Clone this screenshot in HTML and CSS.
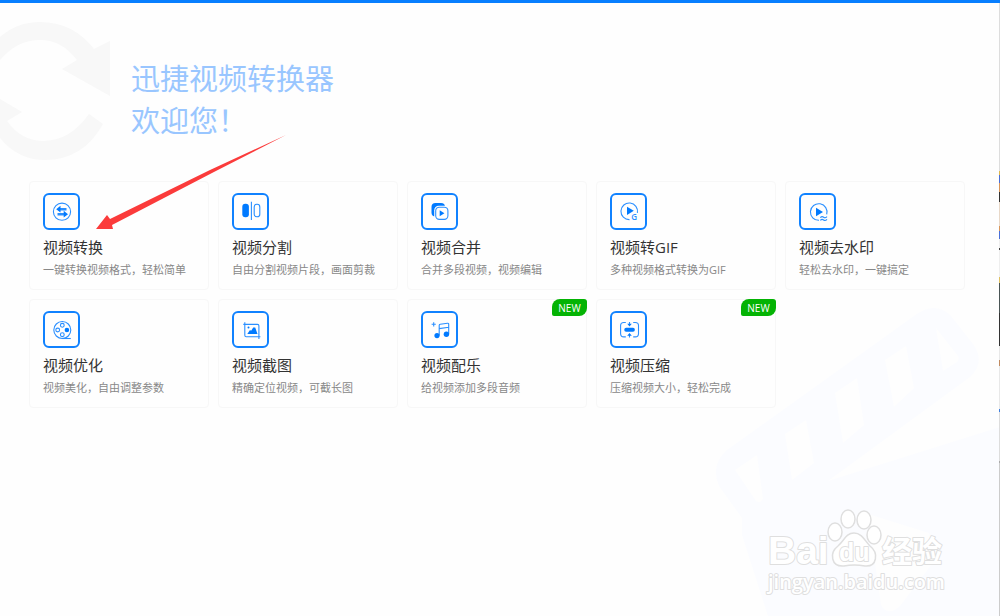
FILE: index.html
```html
<!DOCTYPE html>
<html lang="zh-CN">
<head>
    <meta charset="UTF-8">
    <meta name="viewport" content="width=device-width, initial-scale=1.0">
    <title>迅捷视频转换器</title>
    <link rel="stylesheet" href="styles.css">
</head>
<body>
    <svg class="bg-reload" viewBox="0 0 112 140" aria-hidden="true">
        <path d="M0 17Q17 2 40 2Q73 2 94 29L110 21V76L62 49L77 40Q62 20 40 20Q17 20 0 40Z"/>
        <path d="M0 79L22 92L7 101Q21 121 44 121Q71 120 89 94L103 104Q83 140 45 140Q18 140 0 118Z"/>
    </svg>

    <svg class="bg-clapper" viewBox="715 305 285 311" aria-hidden="true">
        <path fill-rule="evenodd" d="M727 450L914 316Q935 300 951 316L973 344Q986 362 970 377L828 481L1000 427V616H768L742 535V518L719 486Q710 465 727 450Z
            M785 434L806 420L814 463L792 480Z
            M835 393L857 378L864 425L843 443Z
            M885 360L906 346L914 388L894 407Z
            M936 328L958 356Q960 359 957 362L943 371Z
            M735 470L757 455L763 499Q760 504 756 501Z
            M868 514L929 533L935 560L900 606Q888 617 881 605Z"/>
    </svg>

    <header class="welcome">
        <h1>迅捷视频转换器<br>欢迎您！</h1>
    </header>

    <main class="tools">
        <button type="button" class="card">
            <span class="icon">
                <svg viewBox="0 0 33 33">
                    <circle cx="17" cy="16.7" r="8.6"/>
                    <path class="thick" d="M13 14.3H21.5M12.5 19.2H21"/>
                    <path class="solid" d="M15.5 10.8V17.6L11.2 14.2ZM18.7 15.8V22.6L23 19.2Z"/>
                </svg>
            </span>
            <strong>视频转换</strong>
            <small>一键转换视频格式，轻松简单</small>
        </button>

        <button type="button" class="card">
            <span class="icon">
                <svg viewBox="0 0 33 33">
                    <rect class="solid" x="8.3" y="8.8" width="6.6" height="13.5" rx="3"/>
                    <path d="M17.4 6.7V25"/>
                    <rect x="20.2" y="9.3" width="5.6" height="12.5" rx="2.6"/>
                </svg>
            </span>
            <strong>视频分割</strong>
            <small>自由分割视频片段，画面剪裁</small>
        </button>

        <button type="button" class="card">
            <span class="icon">
                <svg viewBox="0 0 33 33">
                    <rect class="solid" x="8.5" y="8" width="13.5" height="13.5" rx="4"/>
                    <rect class="paper" x="11.2" y="10.8" width="15" height="15" rx="4.5"/>
                    <rect x="12.7" y="12.2" width="12.2" height="12.2" rx="3.6"/>
                    <path class="solid" d="M16.7 15.3V21.3L21.4 18.3Z"/>
                </svg>
            </span>
            <strong>视频合并</strong>
            <small>合并多段视频，视频编辑</small>
        </button>

        <button type="button" class="card">
            <span class="icon">
                <svg viewBox="0 0 33 33">
                    <path d="M17.5 24.6A8.3 8.3 0 1 1 25.4 17.8"/>
                    <path class="solid" d="M15 11.7V19.9L21.8 15.8Z"/>
                    <text x="19.2" y="25.2">G</text>
                </svg>
            </span>
            <strong>视频转GIF</strong>
            <small>多种视频格式转换为GIF</small>
        </button>

        <button type="button" class="card">
            <span class="icon">
                <svg viewBox="0 0 33 33">
                    <path d="M18 25.3A8.3 8.3 0 1 1 25.7 19.3"/>
                    <path class="solid" d="M15 12.8V21.2L22 17Z"/>
                    <path d="M19.3 22.6Q21 20.9 22.6 22.2T26 21.6M19.3 25.4Q21 23.7 22.6 25T26 24.4"/>
                </svg>
            </span>
            <strong>视频去水印</strong>
            <small>轻松去水印，一键搞定</small>
        </button>

        <button type="button" class="card">
            <span class="icon">
                <svg viewBox="0 0 33 33">
                    <circle cx="17.3" cy="17" r="8.5"/>
                    <circle cx="17.3" cy="12.3" r="1.9"/>
                    <circle cx="12.7" cy="17" r="1.9"/>
                    <circle class="solid" cx="21.9" cy="17" r="2.3"/>
                    <circle cx="17.3" cy="21.7" r="1.9"/>
                    <path d="M17.3 25.5H25.8"/>
                </svg>
            </span>
            <strong>视频优化</strong>
            <small>视频美化，自由调整参数</small>
        </button>

        <button type="button" class="card">
            <span class="icon">
                <svg viewBox="0 0 33 33">
                    <path d="M9.3 11.4H23.5Q24.9 11.4 24.9 12.8V26M10.8 9.3V22.3Q10.8 23.7 12.2 23.7H26.4"/>
                    <path class="solid" d="M13.3 21L15.8 17.2L17.4 17.6L19.2 14.6H21.2L23.5 21Z"/>
                    <circle class="solid" cx="14.5" cy="14.6" r="1"/>
                </svg>
            </span>
            <strong>视频截图</strong>
            <small>精确定位视频，可截长图</small>
        </button>

        <button type="button" class="card">
            <em class="badge">NEW</em>
            <span class="icon">
                <svg viewBox="0 0 33 33">
                    <path d="M10.7 9.2V13.4M8.6 11.3H12.8"/>
                    <path d="M16.2 22.5V12.4Q16.2 11.4 17.2 11.2L24.5 10.2Q25.7 10.1 25.7 11.2V21M16.2 15.6L25.7 14.2"/>
                    <circle class="solid" cx="14" cy="22.6" r="2.6"/>
                    <circle class="solid" cx="23.4" cy="21.3" r="2.7"/>
                </svg>
            </span>
            <strong>视频配乐</strong>
            <small>给视频添加多段音频</small>
        </button>

        <button type="button" class="card">
            <em class="badge">NEW</em>
            <span class="icon">
                <svg viewBox="0 0 33 33">
                    <path d="M13.8 9.5H11.8Q8.6 9.5 8.6 12.5V20.8Q8.6 23.9 11.8 23.9H13.8M21.2 9.5H23.3Q26.5 9.5 26.5 12.5V20.8Q26.5 23.9 23.3 23.9H21.2"/>
                    <rect class="solid" x="12.3" y="14.8" width="10.5" height="4" rx="1.8"/>
                    <path d="M17.5 9V11.5M17.5 24.4V22"/>
                    <path class="solid" d="M15.2 10.7H19.8L17.5 13.5ZM15.2 22.8H19.8L17.5 20Z"/>
                </svg>
            </span>
            <strong>视频压缩</strong>
            <small>压缩视频大小，轻松完成</small>
        </button>
    </main>

    <!-- flèche vers 视频转换 -->
    <svg class="pointer" viewBox="0 0 192 96" aria-hidden="true">
        <path d="M1 95L12 81L15 85L115 36L191 1L117 39L17 91L18 95Z"/>
    </svg>

    <svg class="watermark" viewBox="0 0 190 92" role="img" aria-label="Baidu 经验">
        <text class="wm-bold" x="8" y="59">Bai</text>
        <ellipse cx="75" cy="27" rx="7" ry="9"/>
        <ellipse cx="88" cy="14" rx="7" ry="9"/>
        <ellipse cx="104" cy="15" rx="7" ry="9"/>
        <ellipse cx="114" cy="30" rx="7" ry="9"/>
        <path d="M94 28C102 28 105 36 110 41C119 48 117 62 105 61Q94 59 84 61C71 62 69 48 78 41C84 36 86 28 94 28Z"/>
        <text class="wm-du" x="79" y="56">du</text>
        <text class="wm-cjk" x="122" y="57">经验</text>
        <text class="wm-url" x="8" y="84">jingyan.baidu.com</text>
    </svg>

    <div class="edge"></div>
</body>
</html>
```
FILE: styles.css
```css
* {
    box-sizing: border-box;
}

body {
    position: relative;
    min-height: 100vh;
    margin: 0;
    overflow: hidden;
    border-top: 3px solid #087fff;
    background: #fefefe;
    font-family: "Open Sans", "Noto Sans CJK SC", sans-serif;
}

/* backgrounds */
.bg-reload {
    position: absolute;
    top: 17px;
    left: 0;
    width: 112px;
    height: 140px;
    fill: #f8f8f8;
}

.bg-clapper {
    position: absolute;
    right: 0;
    bottom: 0;
    width: 285px;
    height: 311px;
    fill: #fbfcff;
}

.welcome {
    position: relative;
    padding: 55px 131px 39px;
}

.welcome h1 {
    margin: 0;
    color: #99c6ff;
    font-size: 29px;
    font-weight: 400;
    line-height: 42px;
}

/* cards */
.tools {
    position: relative;
    display: grid;
    grid-template-columns: repeat(5, 1fr);
    gap: 9px;
    padding: 0 35px 0 29px;
}

.card {
    position: relative;
    display: flex;
    flex-direction: column;
    align-items: flex-start;
    padding: 11px 13px 8px;
    border: 1px solid #f7f7f7;
    border-radius: 4px;
    background: #fefefe;
    font-family: inherit;
    text-align: left;
    white-space: nowrap;
    cursor: pointer;
}

.card:hover {
    border-color: #007aff;
}

.card strong {
    margin-top: 6px;
    color: #333;
    font-size: 15px;
    font-weight: 400;
    line-height: 22px;
}

.card small {
    margin-top: 1px;
    color: #888;
    font-size: 11px;
    line-height: 22px;
}

.icon {
    width: 37px;
    height: 37px;
    border: 2px solid #1082ff;
    border-radius: 6px;
}

.icon svg {
    display: block;
    width: 33px;
    height: 33px;
    fill: none;
    stroke: #2a8fff;
    stroke-width: 1.1;
}

.icon .thick {
    stroke-width: 2.4;
}

.icon .solid {
    fill: #007aff;
    stroke: none;
}

.icon .paper {
    fill: #fefefe;
    stroke: none;
}

.icon text {
    fill: #2a8fff;
    stroke: none;
    font-size: 8px;
    font-weight: 600;
}

.badge {
    position: absolute;
    top: -1px;
    right: -1px;
    width: 35px;
    height: 17px;
    border-radius: 8px 3px 8px 2px;
    background: #04b304;
    color: #fff;
    font-size: 10px;
    font-style: normal;
    line-height: 18px;
    text-align: center;
}

.pointer {
    position: absolute;
    top: 131px;
    left: 95px;
    width: 192px;
    height: 96px;
    fill: #fb3b3b;
    pointer-events: none;
}

/* watermark */
.watermark {
    position: absolute;
    right: 50px;
    bottom: 19px;
    width: 190px;
    height: 92px;
    fill: #fff;
    stroke: #dfdfdf;
    stroke-width: 1.5;
    pointer-events: none;
}

.watermark text {
    paint-order: stroke;
    stroke-width: 2;
    stroke-linejoin: round;
}

.wm-bold {
    font-family: "Liberation Sans", sans-serif;
    font-size: 39px;
    font-weight: 700;
}

.wm-du {
    font-family: "Liberation Sans", sans-serif;
    font-size: 25px;
    font-weight: 700;
}

.wm-cjk {
    font-family: "Noto Sans CJK SC", sans-serif;
    font-size: 30px;
    font-weight: 700;
}

.wm-url {
    font-family: "Open Sans", sans-serif;
    font-size: 20px;
    font-weight: 600;
}

/* window behind, visible on the right edge */
.edge {
    position: absolute;
    top: 0;
    right: 0;
    bottom: 0;
    width: 1px;
    background: linear-gradient(#ddd 168px, #e0b84c 168px 172px, #4a6fd8 172px 180px, #d9965a 180px 189px, #333 189px 199px, #e8d8c8 199px 223px, #d9965a 223px 228px, #4a6fd8 228px 236px, #eee 236px 245px, #444 245px 247px, #eee 247px 274px, #e0c060 274px 280px, #4a5555 280px 310px, #333 310px 343px, #e8e8e8 343px 357px, #c08a60 357px 363px, #e8e8e8 363px 406px, #3f7fe0 406px 409px, #ddd 409px 458px, #aaa 458px 460px, #ccc 460px);
}
```
